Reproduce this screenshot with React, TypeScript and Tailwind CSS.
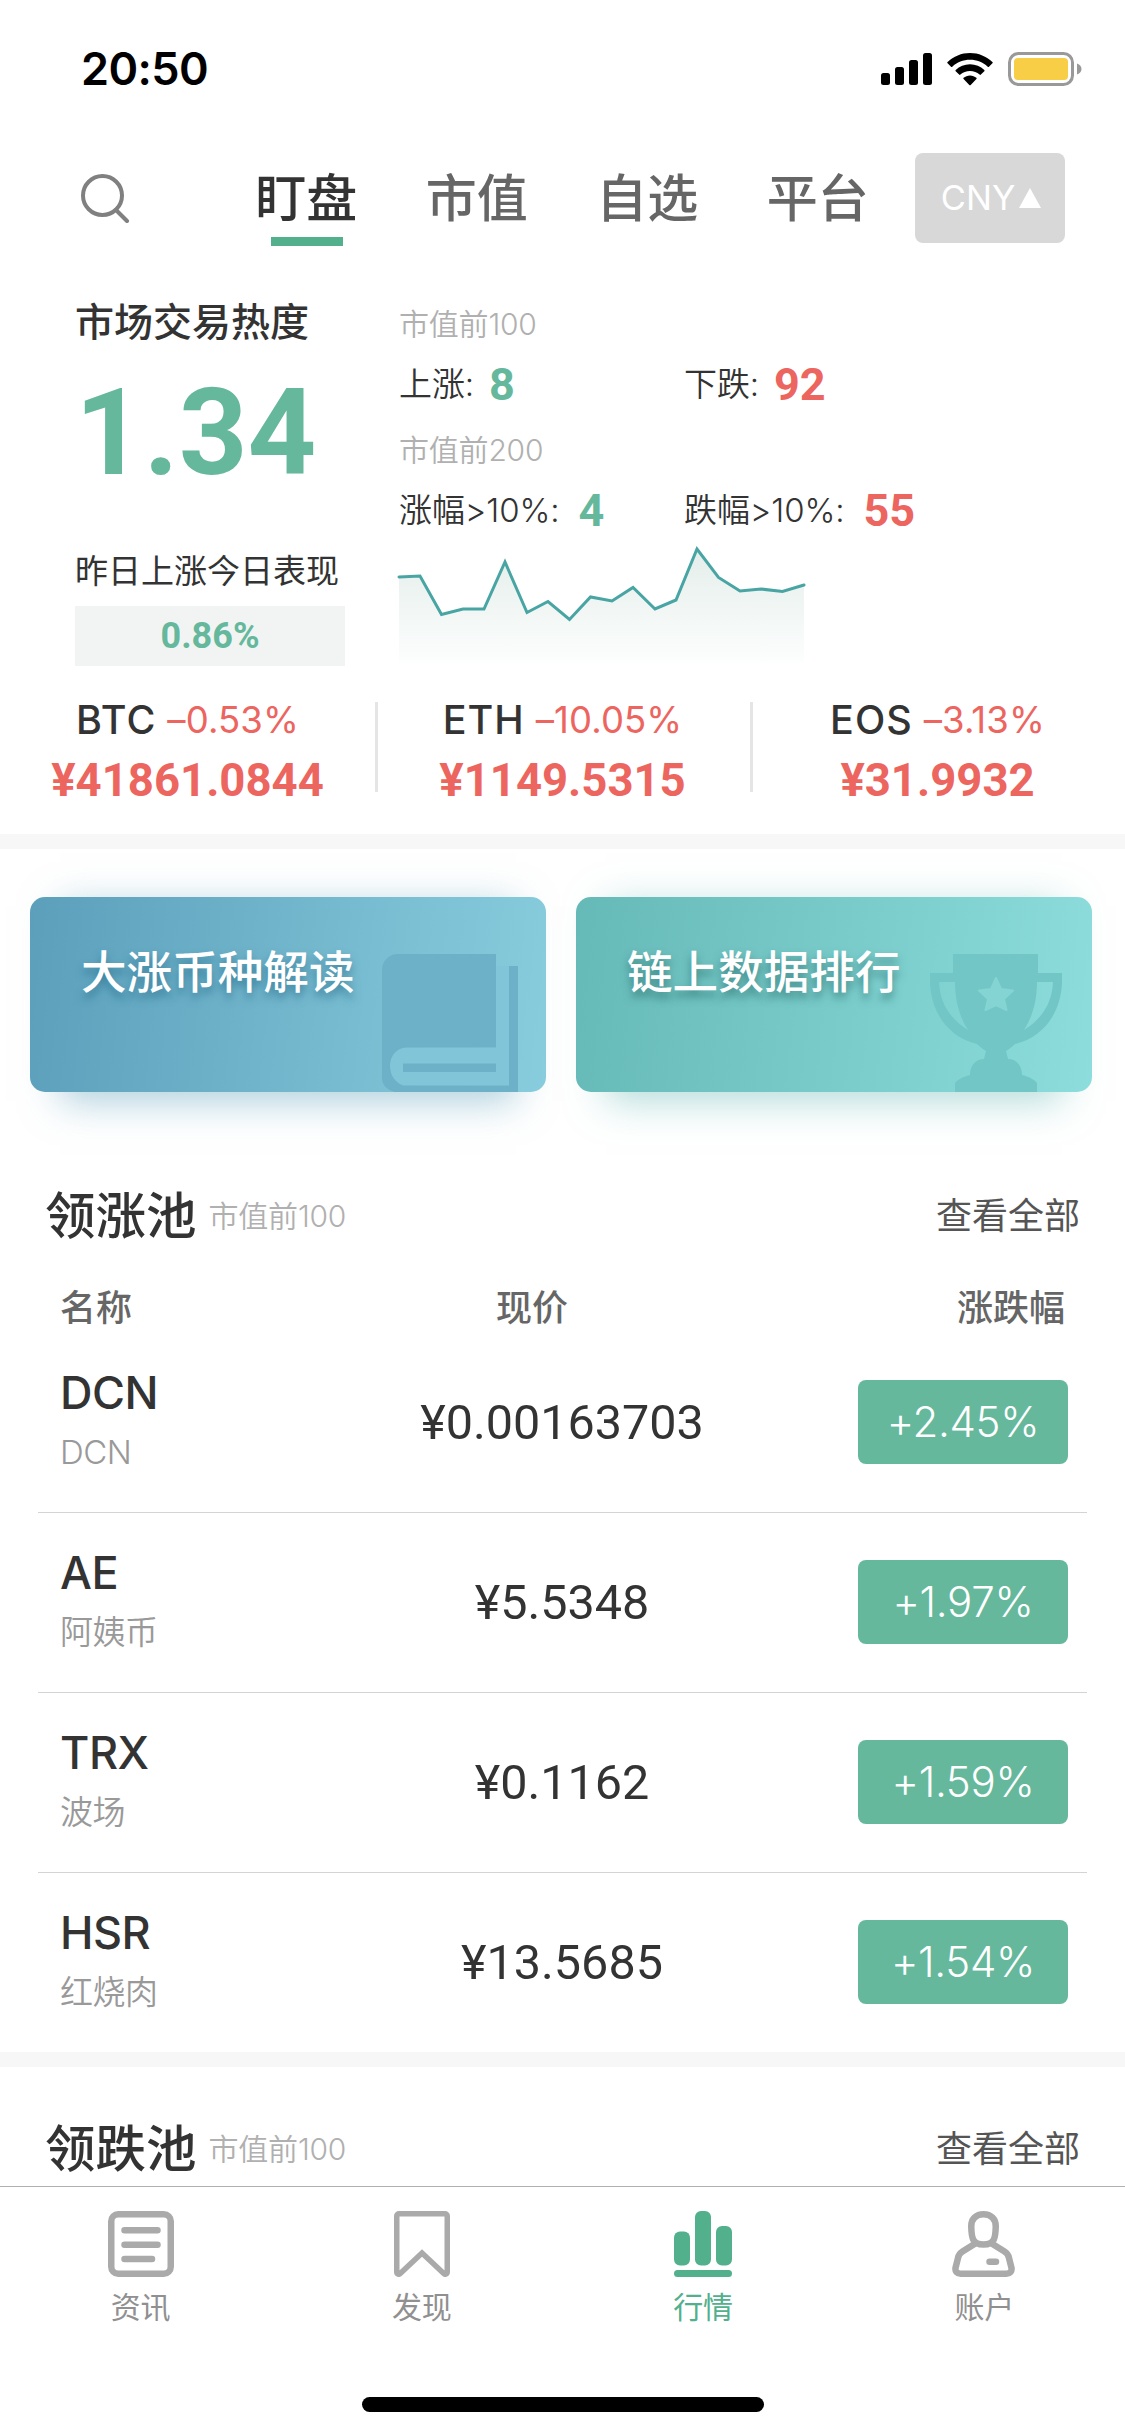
import clsx from "clsx"

const leaders = [
  { symbol: "DCN", name: "DCN", price: "¥0.00163703", change: "+2.45%" },
  { symbol: "AE", name: "阿姨币", price: "¥5.5348", change: "+1.97%" },
  { symbol: "TRX", name: "波场", price: "¥0.1162", change: "+1.59%" },
  { symbol: "HSR", name: "红烧肉", price: "¥13.5685", change: "+1.54%" },
]

const coins = [
  { symbol: "BTC", change: "–0.53%", price: "¥41861.0844" },
  { symbol: "ETH", change: "–10.05%", price: "¥1149.5315" },
  { symbol: "EOS", change: "–3.13%", price: "¥31.9932" },
]

const trend =
  "2,31 23,30 44.5,68.5 66,63 87,63 108,16 130,66.5 151,55.5 172.5,73.5 193.5,51 215,55 236,41.5 258,63 279,54 300,3 321.5,31.5 343,45 364,43 385.5,45.5 407,39"

function StatusBar() {
  return (
    <div className="flex h-[138px] shrink-0 items-center justify-between pr-[43px] pl-[81px]">
      <span className="text-[45px] leading-[54px] font-semibold tracking-[-0.6px] text-black">20:50</span>
      <div className="flex items-center">
        <svg width="52" height="32" viewBox="0 0 52 32">
          <rect x="0" y="20" width="9" height="12" rx="2.5" />
          <rect x="14" y="14" width="9" height="18" rx="2.5" />
          <rect x="28" y="7" width="9" height="25" rx="2.5" />
          <rect x="42" y="0" width="9" height="32" rx="2.5" />
        </svg>
        <svg className="ml-[14px]" width="46" height="33" viewBox="0 0 46 33">
          <path d="M23 0C14.400 0 6.500 3.400 .6 9a.9.900 0 0 0 0 1.300l3.400 3.400a.9.900 0 0 0 1.300 0C10 9.300 16.200 6.800 23 6.800s13 2.500 17.700 6.900a.9.900 0 0 0 1.300 0l3.400-3.400a.9.900 0 0 0 0-1.300C39.500 3.400 31.600 0 23 0z" />
          <path d="M23 11.300c-5.500 0-10.500 2.100-14.300 5.600a.9.900 0 0 0 0 1.300l3.400 3.400a.9.900 0 0 0 1.300 0C16 19.300 19.300 18 23 18s7 1.300 9.600 3.600a.9.900 0 0 0 1.300 0l3.400-3.400a.9.900 0 0 0 0-1.300c-3.800-3.500-8.800-5.600-14.300-5.600z" />
          <path d="M23 22.400c-2.500 0-4.700.9-6.400 2.400a.9.900 0 0 0 0 1.300l5.700 5.900a1 1 0 0 0 1.400 0l5.700-5.900a.9.900 0 0 0 0-1.300c-1.700-1.500-3.900-2.400-6.400-2.400z" />
        </svg>
        <svg className="ml-[15px]" width="74" height="34" viewBox="0 0 74 34">
          <rect x="1.500" y="1.500" width="63" height="31" rx="9" fill="none" stroke="#999" strokeWidth="3" />
          <rect x="6" y="6" width="54" height="22" rx="4" fill="#f7ce46" />
          <path d="M69 11.500c3 1 4.500 3 4.500 5.500s-1.500 4.500-4.500 5.500z" fill="#999" />
        </svg>
      </div>
    </div>
  )
}

function TopTabs() {
  return (
    <div className="flex h-[120px] shrink-0 items-center pr-[60px] pl-[80px]">
      <svg width="50" height="50" viewBox="0 0 50 50" fill="none" stroke="#808080" strokeWidth="4">
        <circle cx="22.500" cy="22.500" r="19.500" />
        <path d="M36 37l11 11" strokeLinecap="round" />
      </svg>
      <div className="ml-[91px] flex h-full flex-1 items-center text-[51px] font-medium text-[#666]">
        {["盯盘", "市值", "自选", "平台"].map((tab, i) => (
          <div key={tab} className={clsx("flex h-full w-[170.500px] shrink-0 flex-col items-center", i === 0 && "text-[#333]")}>
            <span className="mt-[23px] leading-[76px]">{tab}</span>
            {i === 0 && <span className="ml-[2px] h-[9px] w-[72px] bg-[#52b08c]" />}
          </div>
        ))}
      </div>
      <button className="flex h-[90px] w-[150px] shrink-0 items-center justify-center gap-[4px] rounded-[8px] bg-[#d8d8d8] pl-[2px] text-[34.500px] text-white">
        CNY
        <svg width="22" height="20" viewBox="0 0 22 20" fill="#fff">
          <path d="M11 0l11 20H0z" />
        </svg>
      </button>
    </div>
  )
}

function Stat({ label, value, up = false }: { label: string; value: string; up?: boolean }) {
  return (
    <div className="flex w-[285px] items-center whitespace-nowrap">
      <span className="text-[33px] font-[350] tracking-[-0.1px]">{label}</span>
      <span
        className={clsx(
          "font-[Roboto] text-[45px] leading-[54px] font-bold",
          label.length > 3 ? "ml-[19px]" : "ml-[15px]",
          up ? "text-[#65b89b]" : "text-[#ec655f]",
        )}
      >
        {value}
      </span>
    </div>
  )
}

function MarketHeat() {
  return (
    <div className="flex h-[423px] shrink-0 pt-[30px] pl-[75px]">
      <div className="w-[324px]">
        <div className="mt-[4px] text-[39px] leading-[60px] font-medium">市场交易热度</div>
        <div className="mt-[11px] font-[Roboto] text-[120px] leading-[140px] font-bold text-[#65b89b]">1.34</div>
        <div className="mt-[41px] text-[33px] leading-[54px]">昨日上涨今日表现</div>
        <div className="mt-[8px] flex h-[60px] w-[270px] items-center justify-center bg-[#f2f4f4] font-[Roboto] text-[36px] font-bold text-[#65b89b]">
          0.86%
        </div>
      </div>
      <div>
        <div className="mt-[14px] text-[30px] leading-[45px] font-[350] tracking-[-0.2px] text-[#b0b0b0]">市值前100</div>
        <div className="mt-[11px] flex">
          <Stat label="上涨:" value="8" up />
          <Stat label="下跌:" value="92" />
        </div>
        <div className="mt-[16px] text-[30px] leading-[45px] font-[350] tracking-[-0.2px] text-[#b0b0b0]">市值前200</div>
        <div className="mt-[11px] flex">
          <Stat label="涨幅>10%:" value="4" up />
          <Stat label="跌幅>10%:" value="55" />
        </div>
        <svg className="mt-[8px] -ml-[2px]" width="412" height="120" viewBox="0 0 412 120">
          <defs>
            <linearGradient id="trend" x1="0" y1="0" x2="0" y2="1">
              <stop offset="0" stopColor="#e4eeeb" />
              <stop offset="1" stopColor="#fdfefe" />
            </linearGradient>
          </defs>
          <polygon points={`${trend} 407,117 2,117`} fill="url(#trend)" />
          <polyline points={trend} fill="none" stroke="#48a5a3" strokeWidth="3" strokeLinecap="round" />
        </svg>
      </div>
    </div>
  )
}

function CoinStrip() {
  return (
    <div className="grid h-[153px] shrink-0 grid-cols-3 pt-[21px]">
      {coins.map((coin, i) => (
        <div
          key={coin.symbol}
          className={clsx("flex h-[90px] flex-col items-center", i < 2 && "-mr-[3px] border-r-[3px] border-[#e5e5e5]")}
        >
          <div className="flex items-center gap-[11px] leading-[36px]">
            <span className="text-[39.500px] font-[450] tracking-[1px]">{coin.symbol}</span>
            <span className="text-[36.500px] tracking-[0.1px] text-[#ec655f]">{coin.change}</span>
          </div>
          <div className="mt-[16px] font-[Roboto] text-[45.500px] leading-[54px] font-bold text-[#ec655f]">{coin.price}</div>
        </div>
      ))}
    </div>
  )
}

function Banners() {
  return (
    <div className="flex shrink-0 gap-[30px] px-[30px] pt-[48px]">
      <div className="relative h-[195px] w-[516px]">
        <div className="absolute inset-x-[30px] inset-y-0 shadow-[0_9px_36px_rgba(91,159,187,0.500)]" />
        <div className="relative flex h-full justify-between overflow-hidden rounded-[15px] bg-[linear-gradient(97deg,#5b9fbb,#88cddd)] pr-[28px] pl-[51px]">
          <span className="mt-[43px] text-[45.600px] leading-[66px] font-medium text-white [text-shadow:0_6px_9px_rgba(40,110,140,0.700)]">
            大涨币种解读
          </span>
          <svg className="mt-[57px]" width="136" height="138" viewBox="0 0 136 138" fill="#6cb1c8">
            <path d="M114 0v93.500H24C14 95 8 102 8 112s6 17 13 19.500H127V12h-13z" fill="#81c6d8" />
            <path d="M16 0H114V93.500H24C14 94 8 102 8 112s6 17 13 19.500H127V12h9v126H13C5 136 0 131 0 124V16C0 7 7 0 16 0z" />
            <path d="M21 109.500h93v8.500H21z" />
          </svg>
        </div>
      </div>
      <div className="relative h-[195px] w-[516px]">
        <div className="absolute inset-x-[30px] inset-y-0 shadow-[0_9px_36px_rgba(101,185,182,0.500)]" />
        <div className="relative flex h-full justify-between overflow-hidden rounded-[15px] bg-[linear-gradient(97deg,#65b9b6,#8cdddc)] pr-[30px] pl-[51px]">
          <span className="mt-[43px] text-[45.600px] leading-[66px] font-medium text-white [text-shadow:0_6px_9px_rgba(40,110,110,0.700)]">
            链上数据排行
          </span>
          <svg className="mt-[57px]" width="132" height="138" viewBox="0 0 132 138" fill="#72c7c6">
            <path
              fillRule="evenodd"
              d="M23 0h85v19h24c2 37-17 64-47 71-3 3-6 5-9 7l2 8c9 0 14 7 14 16 8 2 13 5 15 8v9H25v-9c2-3 7-6 15-8 0-9 5-16 14-16l2-8c-3-2-6-4-9-7C17 83-2 56 0 19h23zM9 28c1 21 11 37 29 48C29 62 25 46 25 28zM107 28c0 18-4 34-13 48 18-11 28-27 29-48z"
            />
            <path
              d="M66 24l5 11 12 1.500-9 8.500 2.500 11L66 51l-10.500 5L58 45l-9-8.500L61 35z"
              fill="#84d4d3"
              stroke="#84d4d3"
              strokeWidth="2"
              strokeLinejoin="round"
            />
          </svg>
        </div>
      </div>
    </div>
  )
}

function PoolHeader({ title }: { title: string }) {
  return (
    <div className="flex items-center pr-[45px] pl-[45px] leading-[72px]">
      <h2 className="text-[50.500px] font-medium">{title}</h2>
      <span className="ml-[12px] text-[30px] font-[350] tracking-[-0.2px] text-[#b0b0b0]">市值前100</span>
      <span className="ml-auto text-[36px] text-[#555]">查看全部</span>
    </div>
  )
}

function LeaderTable() {
  return (
    <div className="shrink-0">
      <div className="mt-[32px] flex pr-[60px] pl-[60px] text-[36px] leading-[49px] font-medium text-[#666]">
        <span className="w-[436px]">名称</span>
        <span>现价</span>
        <span className="ml-auto">涨跌幅</span>
      </div>
      <div className="mx-[38px]">
        {leaders.map((row, i) => (
          <div
            key={row.symbol}
            className={clsx(
              "grid grid-cols-[1fr_auto_1fr] items-center pr-[19px] pl-[22px]",
              i < 3 ? "h-[180px] border-b border-[#d4d4d4]" : "h-[179px]",
            )}
          >
            <div>
              <div className="text-[45px] leading-[60px] font-[450] tracking-[-0.5px]">{row.symbol}</div>
              <div className="mt-[2px] pb-[3px] text-[33px] leading-[54px] font-[350] tracking-[-0.5px] text-[#999]">{row.name}</div>
            </div>
            <div className="pt-[1px] pr-[4px] font-[Roboto] text-[48.500px]">{row.price}</div>
            <div className="mb-[2px] ml-auto flex h-[84px] w-[210px] items-center justify-center rounded-[8px] bg-[#65b89b] text-[42px] font-[350] tracking-[-0.3px] text-white">
              {row.change}
            </div>
          </div>
        ))}
      </div>
    </div>
  )
}

function NewsIcon() {
  return (
    <svg width="66" height="66" viewBox="0 0 66 66" fill="none" stroke="#aaa" strokeWidth="6.500" strokeLinecap="round">
      <rect x="3.250" y="3.250" width="59.500" height="59.500" rx="7" />
      <path d="M16.500 19.300h33M16.500 33.700h33M16.500 48h27.500" />
    </svg>
  )
}

function DiscoverIcon() {
  return (
    <svg width="56" height="66" viewBox="0 0 56 66" fill="none" stroke="#aaa" strokeWidth="5.500">
      <path d="M5 2.750h46a2.250 2.250 0 0 1 2.250 2.250v56c0 2-2 3-3.500 1.500L28 42 6.250 62.500C4.750 64 2.750 63 2.750 61V5A2.250 2.250 0 0 1 5 2.750z" />
    </svg>
  )
}

function MarketIcon() {
  return (
    <svg width="58" height="66" viewBox="0 0 58 66" fill="#52b08c">
      <rect x="0" y="20.500" width="16" height="34" rx="6" />
      <rect x="21" y="0" width="16" height="54.500" rx="6" />
      <rect x="42" y="15" width="16" height="39.500" rx="6" />
      <rect x="0" y="59" width="58" height="7" rx="3.500" />
    </svg>
  )
}

function AccountIcon() {
  return (
    <svg className="-ml-[2px]" width="63" height="66" viewBox="0 0 63 66" fill="none" stroke="#aaa" strokeWidth="6.500" strokeLinecap="round">
      <path d="M31.500 3.250c-7.500 0-12.500 5-12.250 12.250C19.500 26 20 33.500 31.500 33.500S43.500 26 43.750 15.500C44 8.250 39 3.250 31.500 3.250z" />
      <path d="M22.500 33L10.500 40.500C8 42 6.500 44 6 47L3.500 57c-.5 3.500 1.500 5.750 5 5.750h46c3.500 0 5.500-2.250 5-5.750L57 47c-.5-3-2-5-4.500-6.500L40.500 33" />
      <path d="M37.500 50.700h6.500" />
    </svg>
  )
}

const nav = [
  { label: "资讯", icon: NewsIcon },
  { label: "发现", icon: DiscoverIcon },
  { label: "行情", icon: MarketIcon, active: true },
  { label: "账户", icon: AccountIcon },
]

function TabBar() {
  return (
    <div className="h-[250px] shrink-0 border-t border-[#b0b0b0] bg-white">
      <div className="grid grid-cols-4 pt-[24px]">
        {nav.map(({ label, icon: Icon, active }) => (
          <div key={label} className="flex flex-col items-center">
            <Icon />
            <span className={clsx("mt-[8px] text-[30px] leading-[45px]", active ? "text-[#52b08c]" : "text-[#909090]")}>
              {label}
            </span>
          </div>
        ))}
      </div>
      <div className="mx-auto mt-[67px] h-[15px] w-[402px] rounded-full bg-black" />
    </div>
  )
}

export default function App() {
  return (
    <div className="flex h-[2436px] w-[1125px] flex-col overflow-hidden bg-white font-[Inter,'Noto_Sans_CJK_SC',sans-serif] text-[#333]">
      <StatusBar />
      <TopTabs />
      <MarketHeat />
      <CoinStrip />
      <div className="h-[15px] shrink-0 bg-[#f7f7f7]" />
      <Banners />
      <div className="mt-[88px] shrink-0">
        <PoolHeader title="领涨池" />
      </div>
      <LeaderTable />
      <div className="h-[15px] shrink-0 bg-[#f7f7f7]" />
      <div className="h-[119px] shrink-0 overflow-hidden pt-[46px]">
        <PoolHeader title="领跌池" />
      </div>
      <TabBar />
    </div>
  )
}
